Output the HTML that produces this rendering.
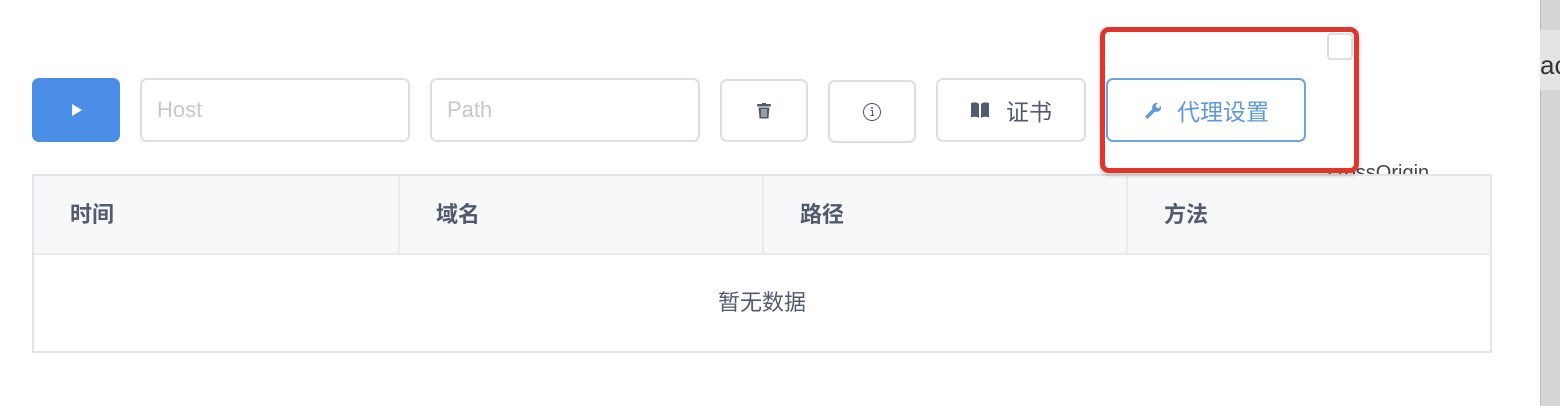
<!DOCTYPE html>
<html><head><meta charset="utf-8"><style>
body{margin:0;width:1560px;height:406px;overflow:hidden;background:#fff;font-family:"Liberation Sans","Noto Sans CJK SC",sans-serif;position:relative}
.a{position:absolute;box-sizing:border-box}
.btn{border:2px solid #dcdee2;border-radius:7px;background:#fff;display:flex;align-items:center;justify-content:center;color:#515a6e;font-size:23px}
.in{border:2px solid #dcdee2;border-radius:7px;color:#c5c8ce;font-size:22px;padding-left:15px;line-height:60px}
.h{position:absolute;top:176px;height:78px;border-right:2px solid #e8eaec;background:#f7f8fa;font-size:22px;font-weight:bold;color:#515a6e;line-height:78px;padding-left:36px;box-sizing:border-box}
</style></head><body>
<div class="a" style="left:1540px;top:0;width:20px;height:406px;background:#d6d6d6;border-left:1px solid #bbb"></div>
<div class="a" style="left:1540px;top:30px;width:20px;height:60px;background:#e4e4e4;font-size:26px;color:#333;line-height:70px;overflow:hidden;padding-left:0">ac</div>
<div class="a" style="left:1520px;top:0;width:20px;height:30px;background:#fff;border-top-right-radius:14px"></div>

<div class="a" style="left:32px;top:78px;width:88px;height:64px;background:#4a8ee8;border-radius:7px"><svg width="88" height="64"><polygon points="40,26 40,38 50,32" fill="#fff"/></svg></div>
<div class="a in" style="left:140px;top:78px;width:270px;height:64px">Host</div>
<div class="a in" style="left:430px;top:78px;width:270px;height:64px">Path</div>
<div class="a btn" style="left:720px;top:79px;width:88px;height:63px"><svg width="14" height="16" viewBox="0 0 14 16"><rect x="0" y="1" width="14" height="2.5" rx="1" fill="#515a6e"/><rect x="5" y="0" width="4" height="2" fill="#515a6e"/><path d="M1.5 4.5h11l-1 11h-9z" fill="#515a6e"/><path d="M5 6v8M7 6v8M9 6v8" stroke="#fff" stroke-width="0.8"/></svg></div>
<div class="a btn" style="left:828px;top:80px;width:88px;height:63px"><svg width="20" height="20"><circle cx="10" cy="10" r="8.5" fill="none" stroke="#515a6e" stroke-width="1"/><circle cx="10" cy="6" r="1" fill="#515a6e"/><path d="M8.5 8.5h2v5M8.5 13.5h3.5" stroke="#515a6e" stroke-width="1" fill="none"/></svg></div>
<div class="a btn" style="left:936px;top:78px;width:150px;height:64px"><svg width="20" height="16" viewBox="0 0 20 16" style="margin-right:16px"><path d="M1 1c3-1 6-1 8 1v14c-2-1.5-5-1.5-8-.5z M11 2c2-2 5-2 8-1v14.5c-3-1-6-1-8 .5z" fill="#515a6e"/></svg>证书</div>
<div class="a btn" style="left:1106px;top:78px;width:200px;height:64px;border-color:#6fa3dd;color:#5e98dc"><svg width="18" height="18" viewBox="0 0 18 18" style="margin-right:16px"><path d="M2 15.5l7.5-7.5a4.5 4.5 0 0 1 5.5-6l-2.5 2.5 1 2 2 1 2.5-2.5a4.5 4.5 0 0 1-6 5.5l-7.5 7.5z" fill="#5e98dc"/></svg>代理设置</div>

<div class="a" style="left:1327px;top:33px;width:26px;height:27px;border:2px solid #dcdee2;border-radius:4px"></div>
<div class="a" style="left:1328px;top:160px;width:170px;height:14px;overflow:hidden;font-size:20px;color:#444;line-height:26px">crossOrigin</div>

<div class="a" style="left:32px;top:174px;width:1460px;height:179px;border:2px solid #e3e5e8;background:#fff"></div>
<div class="h" style="left:34px;width:366px">时间</div>
<div class="h" style="left:400px;width:364px">域名</div>
<div class="h" style="left:764px;width:364px">路径</div>
<div class="h" style="left:1128px;width:362px;border-right:none">方法</div>
<div class="a" style="left:34px;top:253px;width:1456px;height:2px;background:#e8eaec"></div>
<div class="a" style="left:34px;top:255px;width:1456px;height:96px;text-align:center;line-height:96px;font-size:22px;color:#515a6e">暂无数据</div>

<div class="a" style="left:1100px;top:27px;width:259px;height:146px;border:5px solid #e0352b;border-radius:9px;box-shadow:0 2px 4px rgba(0,0,0,.25)"></div>
</body></html>
